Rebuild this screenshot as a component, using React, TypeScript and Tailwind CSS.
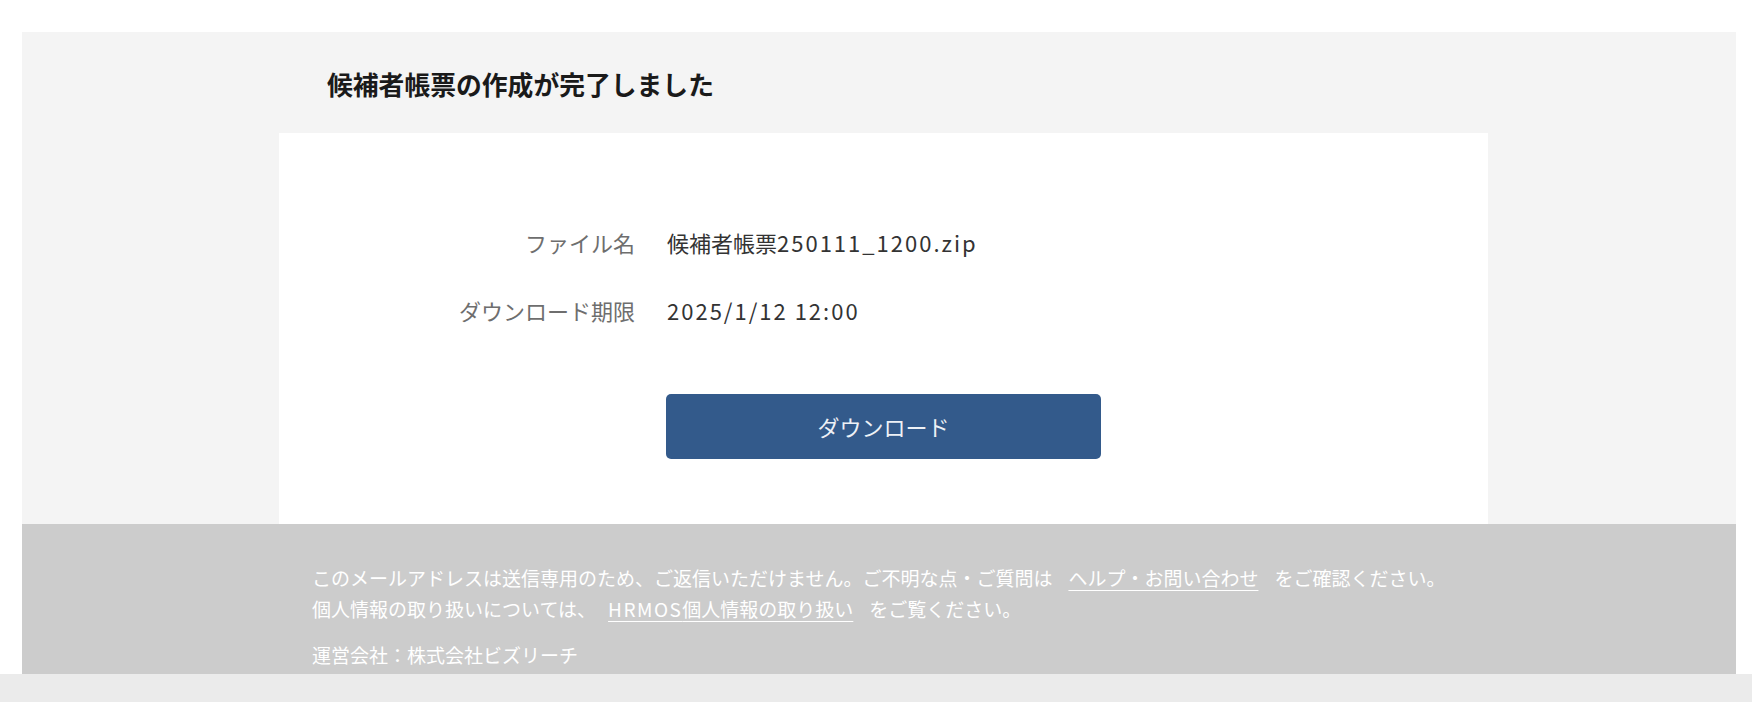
export default function App() {
  const rows = [
    { label: "ファイル名", prefix: "候補者帳票", value: "250111_1200.zip" },
    { label: "ダウンロード期限", prefix: "", value: "2025/1/12 12:00" },
  ];

  return (
    <div className="min-h-screen bg-white font-['Noto_Sans_CJK_JP','Noto_Sans',sans-serif]">
      <div className="pt-[32px]">
        {/* 本文 */}
        <div className="ml-[22px] mr-[16px] bg-[#f4f4f4]">
          <div className="h-[101px] pl-[305px] pt-[34px]">
            <h1 className="text-[25.8px] font-bold leading-[36px] text-[#1a1a1a]">
              候補者帳票の作成が完了しました
            </h1>
          </div>
          <div className="ml-[257px] w-[1209px] bg-white pb-[65px] pt-[93px]">
            <div className="grid grid-cols-[356px_1fr] gap-x-[32px] gap-y-[36px]">
              {rows.map((row) => (
                <div key={row.label} className="contents">
                  <div className="text-right text-[22px] leading-[32px] text-[#6e6e6e]">
                    {row.label}
                  </div>
                  <div className="text-[22px] leading-[32px] text-[#333333]">
                    {row.prefix}
                    <span className="tracking-[2px]">{row.value}</span>
                  </div>
                </div>
              ))}
              <div />
              <div className="mt-[32px]">
                <button className="-ml-px flex h-[65px] w-[435px] items-center justify-center rounded-[5px] bg-[#335a8b] text-[22px] text-[#eef1f6]">
                  ダウンロード
                </button>
              </div>
            </div>
          </div>
        </div>
        {/* フッター */}
        <div className="ml-[22px] mr-[16px] h-[150px] bg-[#cccccc] pl-[290px] pt-[38px] text-[19px] text-white">
          <p className="leading-[31px]">
            このメールアドレスは送信専用のため、ご返信いただけません。ご不明な点・ご質問は
            <a className="mx-4 underline underline-offset-4">ヘルプ・お問い合わせ</a>
            をご確認ください。
          </p>
          <p className="leading-[31px]">
            個人情報の取り扱いについては、
            <a className="ml-3 mr-4 underline underline-offset-4">
              <span className="tracking-[1.5px]">HRMOS</span>個人情報の取り扱い
            </a>
            をご覧ください。
          </p>
          <p className="mt-[15px] leading-[31px]">運営会社：株式会社ビズリーチ</p>
        </div>
        <div className="h-[28px] bg-[#ebebeb]" />
      </div>
    </div>
  );
}
